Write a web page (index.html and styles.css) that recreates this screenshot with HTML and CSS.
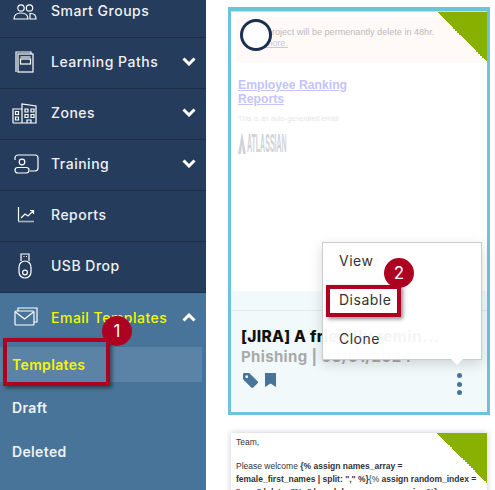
FILE: index.html
```html
<!DOCTYPE html>
<html lang="en">
<head>
    <meta charset="UTF-8">
    <meta name="viewport" content="width=device-width, initial-scale=1.0">
    <title>Email Templates</title>
    <link rel="stylesheet" href="styles.css">
</head>
<body>
    <nav class="sidebar">
        <div class="nav-item">
            <svg class="nav-icon" viewBox="0 0 30 30"><circle cx="11" cy="12" r="3.2"/><circle cx="19.5" cy="12" r="3.2"/><path d="M4 23c0-4.500 3-6 7-6s7 1.500 7 6z"/><path d="M20 17.500h1c3 0 5 2 5 5.500h-6z"/></svg>
            <span class="nav-label">Smart Groups</span>
        </div>
        <div class="nav-item">
            <svg class="nav-icon" viewBox="0 0 30 30"><path d="M6 25V5h15v2"/><rect x="8" y="7" width="15" height="18"/><rect x="10.500" y="12" width="10" height="5"/><path d="M10.500 10h10"/></svg>
            <span class="nav-label">Learning Paths</span>
            <svg class="chevron" viewBox="0 0 14 9"><path d="M1.500 1.500 7 7l5.500-5.500"/></svg>
        </div>
        <div class="nav-item">
            <svg class="nav-icon" viewBox="0 0 30 30"><path d="M3 25V11h9M12 25V6l14 2v17zM3 25h23"/><path d="M5.500 13.500h3v3h-3zM5.500 19h3v3h-3zM15 11h3v3h-3zM21 11h3v3h-3zM15 16.500h3v3h-3zM21 16.500h3v3h-3zM17 25v-3h4v3"/></svg>
            <span class="nav-label">Zones</span>
            <svg class="chevron" viewBox="0 0 14 9"><path d="M1.500 1.500 7 7l5.500-5.500"/></svg>
        </div>
        <div class="nav-item">
            <svg class="nav-icon" viewBox="0 0 30 30"><path d="M5 11V9a3 3 0 0 1 3-3h17a3 3 0 0 1 3 3v10a3 3 0 0 1-3 3h-5"/><circle cx="12" cy="13" r="2.800"/><rect x="5" y="18.500" width="14" height="5.500" rx="2.700"/></svg>
            <span class="nav-label">Training</span>
            <svg class="chevron" viewBox="0 0 14 9"><path d="M1.500 1.500 7 7l5.500-5.500"/></svg>
        </div>
        <div class="nav-item">
            <svg class="nav-icon" viewBox="0 0 30 30"><path d="M8.500 7v14"/><path class="axis" d="M8 21.500h16"/><path d="M11 18l4-4 3 2 5-5M20 10.500h3.500V14"/></svg>
            <span class="nav-label">Reports</span>
        </div>
        <div class="nav-item">
            <svg class="nav-icon" viewBox="0 0 30 30"><path d="M11 10V3h8v7M13.500 5.500h1M16 5.500h1"/><rect x="9" y="10" width="12" height="17" rx="6"/><circle cx="15" cy="21.500" r="2.400"/></svg>
            <span class="nav-label">USB Drop</span>
        </div>
        <div class="nav-group">
            <div class="nav-item nav-item-open">
                <svg class="nav-icon" viewBox="0 0 30 30"><path d="M8 9V6h19v14h-3"/><rect x="5" y="9" width="19" height="14" rx="1"/><path d="M5.500 10l9 7 9-7"/></svg>
                <span class="nav-label">Email Templates</span>
                <svg class="chevron" viewBox="0 0 14 9"><path d="M1.500 7.500 7 2l5.500 5.500"/></svg>
            </div>
            <div class="sub-item sub-item-active">Templates</div>
            <div class="sub-item">Draft</div>
            <div class="sub-item">Deleted</div>
        </div>
        <div class="mark mark-templates"></div>
        <div class="badge badge-one">1</div>
    </nav>

    <main class="content">
        <section class="card card-selected">
            <div class="preview">
                <div class="banner">
                    <p class="banner-text">Your project will be permenantly delete in 48hr.</p>
                    <a class="banner-link">See more.</a>
                </div>
                <a class="mail-title">Employee Ranking<br>Reports</a>
                <p class="mail-note">This is an auto-generated email</p>
                <div class="mail-logo">
                    <svg class="mail-logo-mark" viewBox="0 0 8 22"><path d="M4 0 8 22H5L4 13 3 22H0z"/></svg>
                    <span class="mail-logo-text">ATLASSIAN</span>
                </div>
            </div>
            <div class="card-strip"></div>
            <div class="card-info">
                <h3 class="card-title">[JIRA] A friendly remin...</h3>
                <p class="card-meta">Phishing | 03/01/2024</p>
                <div class="card-actions">
                    <svg class="tag-icon" viewBox="0 0 16 16"><path d="M0 1.500A1.500 1.500 0 0 1 1.500 0h5.200l8.800 8.800a1.500 1.500 0 0 1 0 2.100l-4.600 4.600a1.500 1.500 0 0 1-2.100 0L0 6.700zM4 5.500a1.500 1.500 0 1 0 0-3 1.500 1.500 0 0 0 0 3z"/></svg>
                    <svg class="bookmark-icon" viewBox="0 0 11 14"><path d="M0 0h11v14L5.500 10.500 0 14z"/></svg>
                    <div class="kebab"><i></i><i></i><i></i></div>
                </div>
            </div>
            <div class="ribbon"></div>
            <div class="ghost-icon"></div>
        </section>

        <section class="card card-next">
            <div class="next-text">
                <p>Team,</p>
                <p>Please welcome <b>{% assign names_array =<br>female_first_names | split: "," %}</b>{% <b>assign random_index =</b><br><b>"now" | date: "%s" | modulo: names_array.size %}</b></p>
            </div>
            <div class="ribbon"></div>
        </section>

        <div class="ring"></div>
        <div class="menu">
            <div class="menu-item">View</div>
            <div class="menu-item">Disable</div>
            <div class="menu-item">Clone</div>
        </div>
        <div class="mark mark-disable"></div>
        <div class="badge badge-two">2</div>
    </main>
</body>
</html>
```

FILE: styles.css
```css
* {
    box-sizing: border-box;
}
html, body {
    height: 100%;
}
body {
    margin: 0;
    display: flex;
    overflow: hidden;
    height: 490px;
    background-color: white;
    font-family: Inter, "Open Sans", sans-serif;
}
p, h3 {
    margin: 0;
}

/* sidebar */
.sidebar {
    position: relative;
    flex: 0 0 206px;
    height: 503px;
    margin-top: -13px;
    background-color: #253c5c;
    display: flex;
    flex-direction: column;
}
.nav-item {
    display: flex;
    align-items: center;
    flex: 0 0 51px;
    padding: 0 0 3px 10px;
    border-bottom: 1px solid #1d3049;
    color: #eef1f5;
    font-size: 14px;
    font-weight: 500;
    letter-spacing: 0.5px;
}
.nav-icon {
    flex: 0 0 30px;
    width: 30px;
    height: 30px;
    margin-right: 11px;
    fill: none;
    stroke: white;
    stroke-width: 1.2;
}
.nav-icon .axis {
    stroke: #a9b4c2;
    stroke-width: 1.600;
}
.nav-label {
    flex: 1;
    white-space: nowrap;
}
.chevron {
    width: 14px;
    height: 9px;
    margin-right: 10px;
    fill: none;
    stroke: white;
    stroke-width: 3;
}
.nav-group {
    flex: 1;
    background-color: #48749a;
}
.nav-item-open {
    height: 51px;
    border-bottom: none;
    color: #f6f600;
}
.sub-item {
    height: 44px;
    padding-left: 12px;
    line-height: 44px;
    color: #eef1f5;
    font-size: 14px;
    font-weight: 600;
    letter-spacing: 0.35px;
}
.sub-item-active {
    width: 202px;
    height: 35px;
    margin: 3px 0 4px;
    line-height: 35px;
    background-color: #5a83a5;
    color: #f6f600;
}

/* red tutorial marks */
.mark {
    position: absolute;
    border: 4px solid #ae0021;
    box-shadow: 2px 2px 4px rgba(0, 0, 0, 0.45);
}
.mark-templates {
    left: 3px;
    top: 351px;
    width: 107px;
    height: 48px;
}
.mark-disable {
    left: 326px;
    top: 285px;
    width: 75px;
    height: 32px;
}
.badge {
    position: absolute;
    width: 30px;
    height: 30px;
    border-radius: 50%;
    background-color: #ae0021;
    color: white;
    font-size: 17px;
    line-height: 30px;
    text-align: center;
}
.badge-one {
    left: 102px;
    top: 329px;
}
.badge-two {
    left: 384px;
    top: 258px;
}

/* template cards */
.content {
    flex: 1;
    display: flex;
    flex-direction: column;
    gap: 18px;
    padding: 7px 5px 0 22px;
}
.card {
    position: relative;
    flex-shrink: 0;
    background-color: white;
}
.card-selected {
    height: 408px;
    border: 3px solid #6cc3dc;
    border-top-width: 4px;
    display: flex;
    flex-direction: column;
}
.preview {
    height: 280px;
    padding-top: 5px;
    border-top: 1px solid #d8d8d8;
    color: #bbb;
    font-family: "Liberation Sans", Arial, sans-serif;
}
.banner {
    height: 46px;
    margin-left: 5px;
    padding: 10px 0 0 10px;
    background-color: #fff9f7;
    font-size: 9.100px;
    line-height: 11px;
}
.banner-link {
    color: #c4c4fb;
    text-decoration: underline;
}
.mail-title {
    display: block;
    margin: 15px 0 0 7px;
    color: #c4c4fb;
    font-size: 12.200px;
    font-weight: bold;
    line-height: 14px;
    text-decoration: underline;
}
.mail-note {
    margin: 8px 0 0 7px;
    color: #e6e6e6;
    font-size: 7.200px;
}
.mail-logo {
    display: flex;
    align-items: center;
    margin: 9px 0 0 7px;
    height: 22px;
}
.mail-logo-mark {
    width: 8px;
    height: 22px;
    fill: #d0d3d8;
}
.mail-logo-text {
    margin-left: 1px;
    color: #d0d3d8;
    font-size: 26px;
    font-weight: bold;
    transform: scaleX(0.27);
    transform-origin: left center;
}
.card-strip {
    height: 20px;
    border-bottom: 1px solid #dfe8ea;
    background-color: #f1f9fb;
}
.card-info {
    flex: 1;
    padding: 16px 10px 0 10px;
    background-color: #f1f9fb;
}
.card-title {
    color: #111;
    font-size: 15.500px;
    font-weight: 800;
    line-height: 20px;
    letter-spacing: 0.3px;
    white-space: nowrap;
}
.card-meta {
    color: #a9a9a9;
    font-size: 15px;
    font-weight: 700;
    line-height: 20px;
    letter-spacing: 0.35px;
}
.card-actions {
    display: flex;
    align-items: flex-start;
    gap: 7px;
    margin: 6px 0 0 2px;
}
.tag-icon {
    width: 15px;
    height: 15px;
    fill: #48749a;
}
.bookmark-icon {
    width: 11px;
    height: 14px;
    fill: #48749a;
}
.kebab {
    display: flex;
    flex-direction: column;
    gap: 3.500px;
    margin-left: auto;
    margin-right: 15px;
}
.kebab i {
    width: 5px;
    height: 5px;
    border-radius: 50%;
    background-color: #48749a;
}
.ghost-icon {
    position: absolute;
    right: 15px;
    top: 251px;
    width: 34px;
    height: 36px;
    border-radius: 6px;
    background-color: #f8fcfc;
}
.ribbon {
    position: absolute;
    top: 0;
    right: 0;
    width: 50px;
    height: 50px;
    background: linear-gradient(to top right, transparent 50%, #88b000 50%);
}
.card-selected .ribbon {
    top: 1px;
}
.card-next {
    width: 256px;
    height: 80px;
    margin-left: 3px;
    box-shadow: 0 0 6px rgba(60, 60, 110, 0.3);
    overflow: hidden;
}
.next-text {
    padding: 3px 0 0 5px;
    color: #333;
    font-family: "Liberation Sans", Arial, sans-serif;
    font-size: 8.500px;
    line-height: 13px;
    white-space: nowrap;
}
.next-text p {
    margin-bottom: 11px;
}

/* overlays on the selected card */
.ring {
    position: absolute;
    left: 240px;
    top: 19px;
    width: 32px;
    height: 32px;
    border: 3px solid #1b2f52;
    border-radius: 50%;
    background-color: white;
}
.menu {
    position: absolute;
    left: 322px;
    top: 242px;
    width: 160px;
    height: 118px;
    padding-left: 16px;
    border: 1px solid #ccc;
    background-color: rgba(255, 255, 255, 0.96);
    box-shadow: 0 4px 12px rgba(0, 0, 0, 0.15);
}
.menu::after {
    content: "";
    position: absolute;
    left: 128px;
    bottom: -6px;
    border-left: 6px solid transparent;
    border-right: 6px solid transparent;
    border-top: 6px solid white;
}
.menu-item {
    height: 39px;
    color: #333;
    font-size: 14px;
    line-height: 36px;
    letter-spacing: 0.5px;
}
```
